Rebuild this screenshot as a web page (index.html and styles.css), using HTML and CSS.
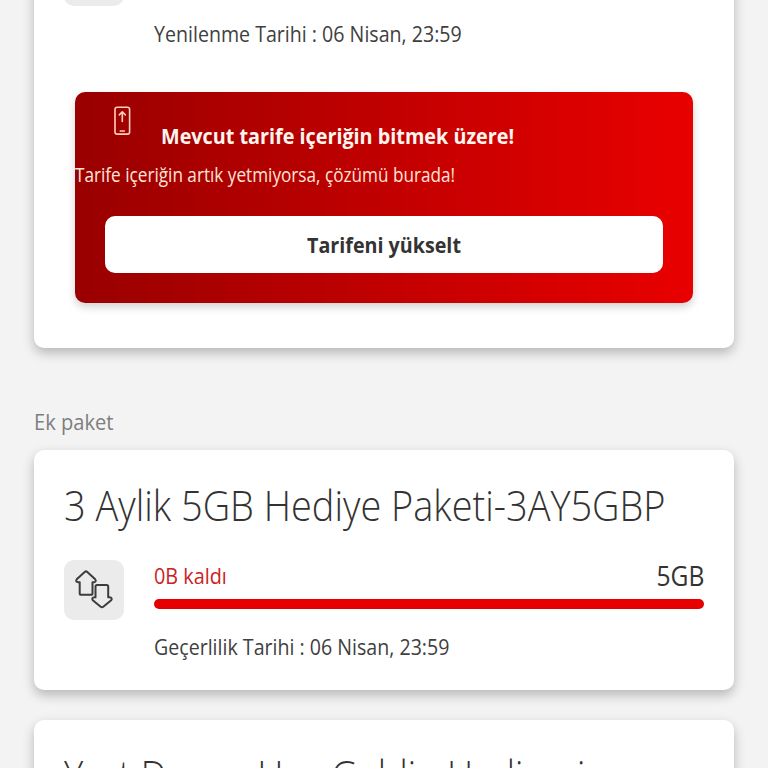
FILE: index.html
```
<!DOCTYPE html>
<html lang="tr">
<head>
<meta charset="utf-8">
<title>Paketlerim</title>
<link rel="stylesheet" href="styles.css">
</head>
<body>
<main class="page">
  <section class="card card-plan">
    <div class="row">
      <div class="tile"></div>
      <p class="date date-renewal">Yenilenme Tarihi : 06 Nisan, 23:59</p>
    </div>
    <div class="banner">
      <div class="banner-head">
        <svg class="phone" width="18" height="30" viewBox="0 0 18 30" fill="none" stroke="#ffd0bd" stroke-width="1.6" stroke-linecap="round" stroke-linejoin="round">
          <rect x="2" y="1.3" width="14.6" height="26.8" rx="2.2"/>
          <path d="M9.3 15.5V6.2M6.3 8.9l3-3.100 3 3.100M7.200 25h4.200"/>
        </svg>
        <h3 class="banner-title">Mevcut tarife içeriğin bitmek üzere!</h3>
      </div>
      <p class="banner-text">Tarife içeriğin artık yetmiyorsa, çözümü burada!</p>
      <button class="upgrade"><span class="upgrade-label">Tarifeni yükselt</span></button>
    </div>
  </section>

  <h2 class="section-label">Ek paket</h2>

  <section class="card card-addon">
    <h3 class="title">3 Aylik 5GB Hediye Paketi-3AY5GBP</h3>
    <div class="row">
      <div class="tile">
        <svg width="60" height="60" viewBox="0 0 60 60" fill="none" stroke="#3c3c3c" stroke-width="2" stroke-linejoin="round" stroke-linecap="round">
          <path d="M20.700 11.900Q22 10.800 23.300 11.900L31.200 19.300Q32.300 20.600 31.400 21.600Q30.400 22.600 28.500 22.200V33.200Q28.500 34.800 26.900 34.800H17.300Q15.700 34.800 15.700 33.200V22.200Q13.600 22.600 12.500 21.600Q11.600 20.600 12.700 19.300Z"/>
          <path d="M33 25H42.600Q44.200 25 44.200 26.600V37.300Q46.400 37 47.300 37.900Q48.300 39 47.200 40.300L39.300 46.700Q38 47.800 36.700 46.700L28.800 40.300Q27.700 39 28.700 37.900Q29.600 37 31.500 37.300V26.600Q31.500 25 33 25Z"/>
        </svg>
      </div>
      <div class="usage">
        <div class="usage-head">
          <span class="left">0B kaldı</span>
          <span class="total">5GB</span>
        </div>
        <div class="bar"></div>
        <p class="date">Geçerlilik Tarihi : 06 Nisan, 23:59</p>
      </div>
    </div>
  </section>

  <section class="card card-next">
    <h3 class="title title-next">Yurt Donus Hos Geldin Hediyesi</h3>
  </section>
</main>
</body>
</html>
```
FILE: styles.css
```
* { box-sizing: border-box; margin: 0; padding: 0; }

body {
  background: #f3f3f3;
  color: #333;
  font-family: "Open Sans", "Noto Sans", sans-serif;
}

.page {
  height: 768px;
  padding: 0 34px;
  overflow: hidden;
}

.card {
  background: #fff;
  border-radius: 10px;
  box-shadow: 0 5px 12px rgba(0, 0, 0, .25);
}

.row { display: flex; gap: 30px; }

.tile {
  flex: none;
  width: 60px;
  height: 60px;
  border-radius: 10px;
  background: #ebebeb;
}

/* Slightly narrowed lettering */
.date, .banner-title, .banner-text, .section-label, .title, .left {
  transform: scaleX(.891);
  transform-origin: left;
  white-space: nowrap;
}

.date {
  font-size: 22px;
  line-height: 30px;
  color: #404040;
}

.card-plan {
  height: 408px;
  margin-top: -60px;
  padding: 6px 41px 0;
}

.card-plan .row { margin-left: -11px; }

.date-renewal { margin: 72px 0 1px; }

.banner {
  height: 211px;
  margin-top: 43px;
  border-radius: 10px;
  background: linear-gradient(90deg, #990000, #e60000 96%);
  box-shadow: 0 4px 8px rgba(0, 0, 0, .18);
  color: #fff;
}

.banner-head {
  display: flex;
  gap: 30px;
  padding: 14px 0 0 38px;
}

.banner-title {
  margin-top: 14px;
  font-size: 22px;
  line-height: 30px;
  font-weight: 700;
  color: #fff5ee;
  transform: scaleX(.899);
}

.banner-text {
  margin-top: 11px;
  font-size: 20px;
  line-height: 28px;
  color: #ffe5d9;
  transform: scaleX(.858);
}

.upgrade {
  display: block;
  width: 558px;
  height: 57px;
  margin: 27px 0 0 30px;
  padding-bottom: 2px;
  border: 0;
  border-radius: 10px;
  background: #fff;
  color: #333;
  font: 700 22px/30px "Open Sans", sans-serif;
}

.upgrade-label {
  display: inline-block;
  transform: scaleX(.895);
}

.section-label {
  margin-top: 58px;
  font-size: 22px;
  line-height: 30px;
  font-weight: 400;
  color: #7e7e7e;
  transform: scaleX(.914);
}

.card-addon {
  height: 240px;
  margin-top: 14px;
  padding: 26px 30px 0;
}

.title {
  font-size: 43px;
  line-height: 58px;
  font-weight: 300;
  transform: scaleX(.882);
}

.card-addon .row { margin-top: 26px; }

.usage { flex: 1; }

.usage-head {
  display: flex;
  justify-content: space-between;
  align-items: flex-start;
  height: 39px;
}

.left {
  font-size: 22px;
  line-height: 30px;
  color: #cc2222;
  transform: scaleX(.9);
}

.total {
  font-size: 28px;
  line-height: 30px;
  transform: scaleX(.88);
  transform-origin: right;
}

.bar {
  height: 10px;
  border-radius: 5px;
  background: #e60000;
}

.usage .date { margin-top: 22px; }

.card-next {
  height: 240px;
  margin-top: 30px;
  padding: 26px 30px 0;
}

.title-next { transform: scaleX(.848); }
```
